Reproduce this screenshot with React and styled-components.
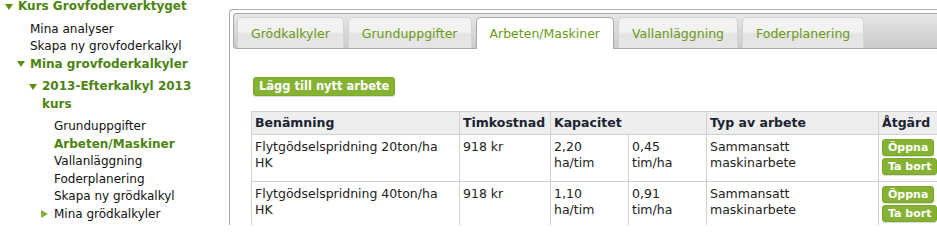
import styled, { createGlobalStyle } from "styled-components";

// GLOBAL
const GlobalStyle = createGlobalStyle`
  html, body {
    margin: 0;
    padding: 0;
    background: #fff;
    overflow: hidden;
  }
  body {
    font-family: "DejaVu Sans", Verdana, sans-serif;
    font-size: 12px;
    color: #222;
  }
`;

// STYLED COMPONENTS
const Page = styled.div`
  display: flex;
  align-items: flex-start;
  width: 1000px;
  height: 225px;
  overflow: hidden;
`;

const Sidebar = styled.nav`
  width: 212px;
  flex-shrink: 0;
  margin-top: -2px;
  padding-right: 17px;
`;

const Row = styled.div`
  display: flex;
  align-items: flex-start;
  padding-left: ${(p) => p.$x - (p.$arrow ? 13 : 0)}px;
  margin-bottom: ${(p) => (p.$gap ? 5 : 0)}px;
  line-height: 17.5px;
  font-weight: ${(p) => (p.$bold ? 700 : 400)};
  color: ${(p) => (p.$bold ? "#4c8412" : "#111")};
`;

const Arrow = styled.span`
  width: 13px;
  height: 17.5px;
  flex-shrink: 0;
  display: flex;
  align-items: center;
`;

const Panel = styled.main`
  width: 740px;
  flex-shrink: 0;
  margin-top: 9px;
  border: 1px solid #aaa;
  border-right: none;
  border-radius: 4px 0 0 0;
  padding: 3px 0 0 3px;
  min-height: 220px;
`;

const TabBar = styled.ul`
  display: flex;
  gap: 4px;
  margin: 0;
  padding: 3px 3px 0 3px;
  list-style: none;
  border: 1px solid #aaa;
  border-right: none;
  border-radius: 4px 0 0 4px;
  background: linear-gradient(#e6e6e6, #cbcbcb);
  height: 31px;
`;

const Tab = styled.li`
  height: ${(p) => (p.$active ? 31 : 30)}px;
  padding: 0 13px;
  display: flex;
  align-items: center;
  border: 1px solid ${(p) => (p.$active ? "#aaa" : "#d3d3d3")};
  border-bottom: none;
  border-radius: 5px 5px 0 0;
  background: ${(p) =>
    p.$active ? "#fff" : "linear-gradient(#f2f2f2 45%, #e4e4e4 55%, #e6e6e6)"};
  color: #6a9914;
  font-size: 12.5px;
  white-space: nowrap;
  margin-bottom: ${(p) => (p.$active ? -1 : 0)}px;
  position: relative;
`;

const PanelBody = styled.section`
  padding: 28px 0 0 18px;
`;

const GreenButton = styled.button`
  display: block;
  width: fit-content;
  font-family: inherit;
  font-weight: 700;
  font-size: ${(p) => (p.$small ? 11 : 11.5)}px;
  color: #fff;
  background: #86b233;
  border: 1px solid #7da82c;
  border-radius: 3px;
  box-shadow: 0 1px 1px rgba(0, 0, 0, 0.15);
  padding: ${(p) => (p.$small ? "0 5px" : "0 5px")};
  height: ${(p) => (p.$small ? 17 : 19)}px;
  line-height: ${(p) => (p.$small ? 15 : 17)}px;
  margin: ${(p) => (p.$small ? "0 0 2px 0" : "0 0 15px 2px")};
  cursor: pointer;
`;

const Table = styled.table`
  border-collapse: collapse;
  table-layout: fixed;
  width: 690px;
  line-height: 16px;
`;

const Th = styled.th`
  background: #eee;
  border: 1px solid #d0d0d0;
  padding: 3px 3px;
  text-align: left;
  color: #1b2231;
  font-size: 12.5px;
  white-space: nowrap;
`;

const Td = styled.td`
  border: 1px solid #d0d0d0;
  padding: 4px 3px 4px 3px;
  vertical-align: top;
  color: #222;
  font-size: 12.5px;
`;

// ICONS
function Down() {
  return (
    <svg width="8" height="6" viewBox="0 0 8 6">
      <path d="M0 0 H8 L4 6 Z" fill="#5b9018" />
    </svg>
  );
}

function Right() {
  return (
    <svg width="7" height="8" viewBox="0 0 7 8">
      <path d="M0 0 L7 4 L0 8 Z" fill="#86b233" />
    </svg>
  );
}

const rows = [
  { name: "Flytgödselspridning 20ton/ha HK", cost: "918 kr", cap1: "2,20 ha/tim", cap2: "0,45 tim/ha" },
  { name: "Flytgödselspridning 40ton/ha HK", cost: "918 kr", cap1: "1,10 ha/tim", cap2: "0,91 tim/ha" },
];

const tabs = ["Grödkalkyler", "Grunduppgifter", "Arbeten/Maskiner", "Vallanläggning", "Foderplanering"];

// APP
export default function App() {
  return (
    <>
      <GlobalStyle />
      <Page>
        <Sidebar>
          <Row $x={18} $arrow $bold $gap><Arrow><Down /></Arrow><span>Kurs Grovfoderverktyget</span></Row>
          <Row $x={30}><span>Mina analyser</span></Row>
          <Row $x={30}><span>Skapa ny grovfoderkalkyl</span></Row>
          <Row $x={30} $arrow $bold $gap><Arrow><Down /></Arrow><span>Mina grovfoderkalkyler</span></Row>
          <Row $x={42} $arrow $bold $gap><Arrow><Down /></Arrow><span>2013-Efterkalkyl 2013 kurs</span></Row>
          <Row $x={54}><span>Grunduppgifter</span></Row>
          <Row $x={54} $bold><span>Arbeten/Maskiner</span></Row>
          <Row $x={54}><span>Vallanläggning</span></Row>
          <Row $x={54}><span>Foderplanering</span></Row>
          <Row $x={54}><span>Skapa ny grödkalkyl</span></Row>
          <Row $x={54} $arrow><Arrow><Right /></Arrow><span>Mina grödkalkyler</span></Row>
        </Sidebar>

        <Panel>
          <TabBar>
            {tabs.map((t) => (
              <Tab key={t} $active={t === "Arbeten/Maskiner"}>{t}</Tab>
            ))}
          </TabBar>
          <PanelBody>
            <GreenButton>Lägg till nytt arbete</GreenButton>
            <Table>
              <colgroup>
                <col style={{ width: 208 }} />
                <col style={{ width: 91 }} />
                <col style={{ width: 78 }} />
                <col style={{ width: 78 }} />
                <col style={{ width: 172 }} />
                <col style={{ width: 63 }} />
              </colgroup>
              <thead>
                <tr>
                  <Th>Benämning</Th>
                  <Th>Timkostnad</Th>
                  <Th colSpan={2}>Kapacitet</Th>
                  <Th>Typ av arbete</Th>
                  <Th>Åtgärd</Th>
                </tr>
              </thead>
              <tbody>
                {rows.map((r) => (
                  <tr key={r.name}>
                    <Td>{r.name}</Td>
                    <Td>{r.cost}</Td>
                    <Td>{r.cap1}</Td>
                    <Td>{r.cap2}</Td>
                    <Td>Sammansatt maskinarbete</Td>
                    <Td>
                      <GreenButton $small>Öppna</GreenButton>
                      <GreenButton $small>Ta bort</GreenButton>
                    </Td>
                  </tr>
                ))}
              </tbody>
            </Table>
          </PanelBody>
        </Panel>
      </Page>
    </>
  );
}
